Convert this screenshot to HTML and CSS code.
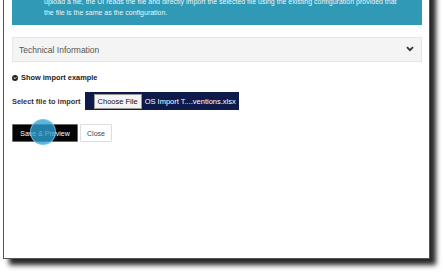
FILE: index.html
```html
<!DOCTYPE html>
<html lang="en">
<head>
  <meta charset="UTF-8">
  <meta name="viewport" content="width=device-width, initial-scale=1.0">
  <title>Import</title>
  <link rel="stylesheet" href="styles.css">
</head>
<body>

  <!-- Screenshot frame -->
  <div class="frame">

    <div class="alert">
      <p>upload a file, the UI reads the file and directly import the selected file using the existing configuration provided that</p>
      <p>the file is the same as the configuration.</p>
    </div>

    <div class="panel">
      <span>Technical Information</span>
      <svg class="chevron" width="8" height="6" viewBox="0 0 8 6">
        <path d="M1 1.2 L4 4.2 L7 1.2" fill="none" stroke="#333" stroke-width="1.8"/>
      </svg>
    </div>

    <div class="toggle">
      <svg width="6" height="6" viewBox="0 0 6 6">
        <circle cx="3" cy="3" r="3" fill="#222"/>
        <path d="M1.6 2.3 L3 3.7 L4.4 2.3" fill="none" stroke="#fff" stroke-width="1"/>
      </svg>
      <span>Show import example</span>
    </div>

    <div class="file-row">
      <label>Select file to import</label>
      <div class="file-box">
        <span class="choose">Choose File</span>
        <span class="file-name">OS Import T....ventions.xlsx</span>
      </div>
    </div>

    <div class="actions">
      <button class="btn btn-dark">Save &amp; Preview</button>
      <button class="btn btn-light">Close</button>
      <span class="click"></span>
    </div>

  </div>

</body>
</html>
```

FILE: styles.css
```css
html,
body {
  height: 273px;
}

body {
  margin: 0;
  background: #fff;
  overflow: hidden;
  font-family: "Liberation Sans", Arial, sans-serif;
}

/* Frame around the captured page */
.frame {
  margin: -20px 0 0 3px;
  width: 427px;
  height: 279px;
  border: 1px solid #555;
  background: #fff;
  box-shadow: 6px 6px 5px rgba(0, 0, 0, 0.85);
  padding: 0 7px 0 8px;
  box-sizing: border-box;
  position: relative;
}

.alert {
  background: #2f99b6;
  color: #e9f5f9;
  font-size: 7px;
  line-height: 11px;
  padding: 15px 10px 7px 32px;
}

.alert p {
  margin: 0;
  white-space: nowrap;
}

.panel {
  margin-top: 12px;
  height: 25px;
  background: #f4f4f4;
  border: 1px solid #e6e6e6;
  box-sizing: border-box;
  display: flex;
  align-items: center;
  justify-content: space-between;
  padding: 0 7px 0 6px;
  color: #555;
  font-size: 8.5px;
}

.chevron {
  margin-top: -2px;
}

.toggle {
  margin-top: 11px;
  display: flex;
  align-items: center;
  gap: 3px;
  font-size: 7.4px;
  font-weight: bold;
  color: #222;
}

.file-row {
  margin-top: 10px;
  display: flex;
  align-items: center;
  gap: 4px;
  font-size: 7.4px;
  font-weight: bold;
  color: #333;
}

.file-box {
  width: 154px;
  height: 18px;
  background: #0e1a4a;
  box-sizing: border-box;
  display: flex;
  align-items: center;
  padding-left: 9px;
  gap: 3px;
}

.choose {
  background: #f4f4f4;
  color: #111;
  font-weight: normal;
  font-size: 7.5px;
  padding: 2px 3px;
  border: 1px solid #999;
}

.file-name {
  color: #fff;
  font-weight: normal;
  font-size: 7.5px;
}

.actions {
  margin-top: 14px;
  display: flex;
  gap: 2px;
  position: relative;
}

.btn {
  height: 18px;
  font-family: "Liberation Sans", Arial, sans-serif;
  font-size: 7px;
  padding: 0 5px;
  border-radius: 1px;
}

.btn-dark {
  background: #050505;
  color: #fff;
  border: 1px solid #666;
  width: 66px;
}

.btn-light {
  background: #fff;
  color: #444;
  border: 1px solid #ddd;
  width: 32px;
}

/* click highlight */
.click {
  position: absolute;
  left: 18px;
  top: -5px;
  width: 26px;
  height: 26px;
  border-radius: 50%;
  background: rgba(46, 160, 210, 0.78);
  border: 1px solid rgba(120, 200, 235, 0.8);
  box-sizing: border-box;
}
```
